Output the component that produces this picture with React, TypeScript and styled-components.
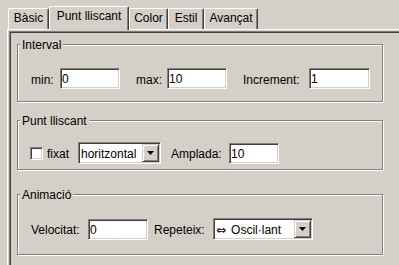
import React from 'react';
import styled, { createGlobalStyle } from 'styled-components';

const GlobalStyle = createGlobalStyle`
  html, body {
    margin: 0;
    padding: 0;
    background: #d4d0c8;
    overflow: hidden;
  }
  body {
    font-family: 'Liberation Sans', Arial, 'DejaVu Sans', sans-serif;
    font-size: 12px;
    color: #000;
  }
`;

const Window = styled.div`
  width: 399px;
  height: 265px;
  display: flex;
  flex-direction: column;
  background: #d4d0c8;
  overflow: hidden;
`;

const TabStrip = styled.div`
  display: flex;
  align-items: flex-end;
  height: 29px;
  padding-left: 8px;
  flex-shrink: 0;
`;

const Tab = styled.div<{ $w: number; $active?: boolean }>`
  box-sizing: border-box;
  width: ${p => p.$w}px;
  height: ${p => (p.$active ? 24 : 21)}px;
  margin-bottom: ${p => (p.$active ? -1 : 0)}px;
  position: relative;
  z-index: ${p => (p.$active ? 1 : 0)};
  padding-top: 2px;
  line-height: 14px;
  text-align: center;
  white-space: nowrap;
  background: #d4d0c8;
  border-top: 1px solid #fff;
  border-left: 1px solid #fff;
  border-right: 1px solid #404040;
  border-radius: 2px 2px 0 0;
  box-shadow: inset -1px 0 0 #808080;
`;

const Frame = styled.div`
  flex: 1;
  display: flex;
  margin-left: 7px;
  padding: 1px 0 0 1px;
  border-top: 1px solid #fff;
  border-left: 1px solid #fff;
`;

const Panel = styled.div`
  flex: 1;
  display: flex;
  flex-direction: column;
  border-top: 1px solid #808080;
  border-left: 1px solid #808080;
  box-shadow: inset 1px 1px 0 #404040;
  padding: 12px 0 0 7px;
`;

const Group = styled.div<{ $h: number; $pt: number; $mt?: number }>`
  position: relative;
  box-sizing: border-box;
  width: 366px;
  height: ${p => p.$h}px;
  margin-top: ${p => p.$mt ?? 0}px;
  padding-top: ${p => p.$pt}px;
  border: 1px solid #808080;
  box-shadow: inset 1px 1px 0 #fff, 1px 1px 0 #fff;
  flex-shrink: 0;
`;

const GroupTitle = styled.span`
  position: absolute;
  top: -7px;
  left: 2px;
  padding: 0 2px;
  line-height: 14px;
  background: #d4d0c8;
  white-space: nowrap;
`;

const Row = styled.div<{ $pl: number }>`
  display: flex;
  align-items: center;
  padding-left: ${p => p.$pl}px;
`;

const Label = styled.span<{ $w: number; $ml?: number }>`
  display: block;
  flex-shrink: 0;
  width: ${p => p.$w}px;
  margin-left: ${p => p.$ml ?? 0}px;
  padding-top: 2px;
  line-height: 14px;
  white-space: nowrap;
`;

const Field = styled.div<{ $w: number }>`
  box-sizing: border-box;
  flex-shrink: 0;
  width: ${p => p.$w}px;
  height: 21px;
  padding: 2px 1px 0;
  line-height: 17px;
  background: #fff;
  border: 1px solid;
  border-color: #808080 #fff #fff #808080;
  box-shadow: inset 1px 1px 0 #404040, inset -1px -1px 0 #d4d0c8;
  white-space: nowrap;
  overflow: hidden;
`;

const Check = styled.div`
  box-sizing: border-box;
  flex-shrink: 0;
  width: 13px;
  height: 13px;
  background: #fff;
  border: 1px solid;
  border-color: #808080 #fff #fff #808080;
  box-shadow: inset 1px 1px 0 #404040, inset -1px -1px 0 #d4d0c8;
`;

const Combo = styled.div<{ $w: number }>`
  box-sizing: border-box;
  flex-shrink: 0;
  display: flex;
  width: ${p => p.$w}px;
  height: 22px;
  padding: 1px;
  background: #fff;
  border: 1px solid;
  border-color: #808080 #fff #fff #808080;
  box-shadow: inset 1px 1px 0 #404040, inset -1px -1px 0 #d4d0c8;
`;

const ComboText = styled.div`
  flex: 1;
  padding: 2px 0 0 1px;
  line-height: 16px;
  white-space: nowrap;
  overflow: hidden;
`;

const Glyph = styled.span`
  font-family: 'DejaVu Sans', sans-serif;
  font-size: 12px;
  margin-right: 5px;
`;

const ArrowButton = styled.div`
  box-sizing: border-box;
  width: 17px;
  flex-shrink: 0;
  display: flex;
  align-items: center;
  justify-content: center;
  background: #d4d0c8;
  border: 1px solid;
  border-color: #d4d0c8 #404040 #404040 #d4d0c8;
  box-shadow: inset 1px 1px 0 #fff, inset -1px -1px 0 #808080;
`;

const Arrow = () => (
  <svg width="7" height="4" viewBox="0 0 7 4">
    <polygon points="0,0 7,0 3.5,4" fill="#000" />
  </svg>
);

const ComboBox = ({ w, glyph, value }: { w: number; glyph?: string; value: string }) => (
  <Combo $w={w}>
    <ComboText>
      {glyph && <Glyph>{glyph}</Glyph>}
      {value}
    </ComboText>
    <ArrowButton>
      <Arrow />
    </ArrowButton>
  </Combo>
);

const tabs = [
  { label: 'Bàsic', w: 41 },
  { label: 'Punt lliscant', w: 80, active: true },
  { label: 'Color', w: 39 },
  { label: 'Estil', w: 36 },
  { label: 'Avançat', w: 54 },
];

export default function App() {
  return (
    <>
      <GlobalStyle />
      <Window>
        <TabStrip>
          {tabs.map(t => (
            <Tab key={t.label} $w={t.w} $active={t.active}>
              {t.label}
            </Tab>
          ))}
        </TabStrip>
        <Frame>
          <Panel>
            <Group $h={58} $pt={23}>
              <GroupTitle>Interval</GroupTitle>
              <Row $pl={13}>
                <Label $w={29}>min:</Label>
                <Field $w={60}>0</Field>
                <Label $w={31} $ml={16}>max:</Label>
                <Field $w={60}>10</Field>
                <Label $w={66} $ml={16}>Increment:</Label>
                <Field $w={61}>1</Field>
              </Row>
            </Group>

            <Group $h={50} $pt={21} $mt={18}>
              <GroupTitle>Punt lliscant</GroupTitle>
              <Row $pl={12}>
                <Check />
                <Label $w={31} $ml={4}>fixat</Label>
                <ComboBox w={83} value="horitzontal" />
                <Label $w={58} $ml={10}>Amplada:</Label>
                <Field $w={50}>10</Field>
              </Row>
            </Group>

            <Group $h={61} $pt={23} $mt={24}>
              <GroupTitle>Animació</GroupTitle>
              <Row $pl={13}>
                <Label $w={57}>Velocitat:</Label>
                <Field $w={60}>0</Field>
                <Label $w={59} $ml={6}>Repeteix:</Label>
                <ComboBox w={100} glyph="⇔" value="Oscil·lant" />
              </Row>
            </Group>
          </Panel>
        </Frame>
      </Window>
    </>
  );
}
